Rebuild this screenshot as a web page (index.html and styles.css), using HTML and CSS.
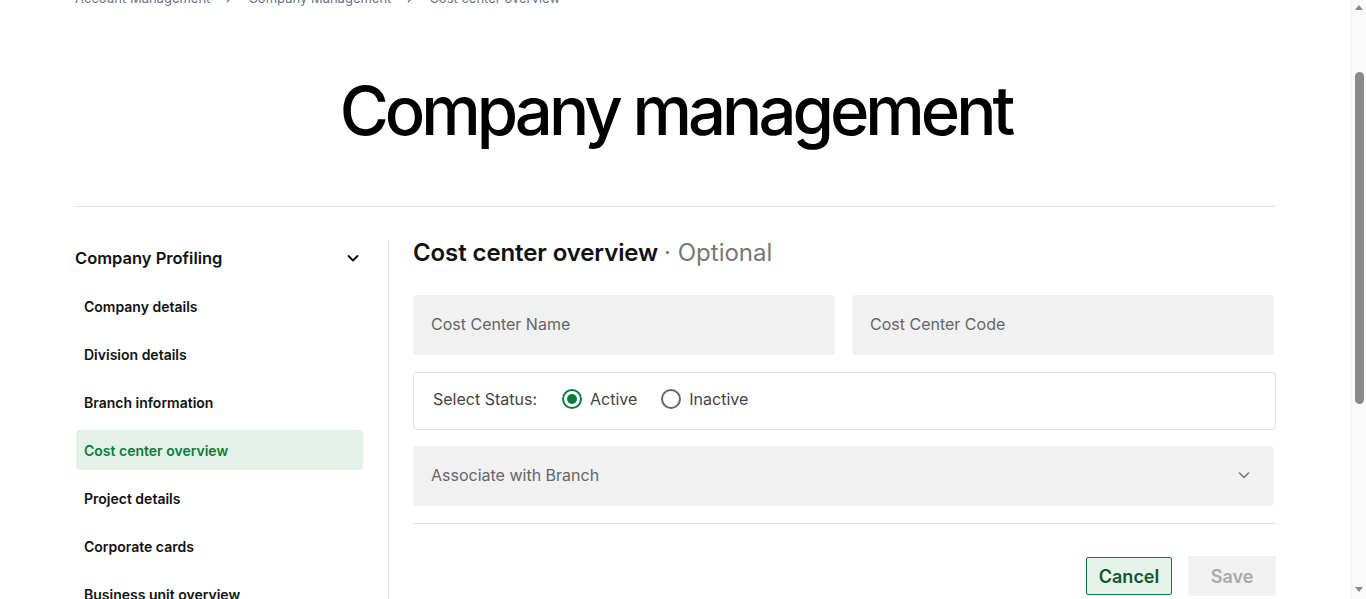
FILE: index.html
```html
<!DOCTYPE html>
<html lang="en">
<head>
<meta charset="utf-8">
<title>Company management</title>
<link rel="stylesheet" href="styles.css">
</head>
<body>
<div class="page">
  <nav class="breadcrumb">
    <span class="crumb">Account Management</span>
    <svg class="crumb-sep" width="8" height="12" viewBox="0 0 8 12"><path d="M2 2l4 4-4 4" fill="none" stroke="#6b7280" stroke-width="1.3"/></svg>
    <span class="crumb">Company Management</span>
    <svg class="crumb-sep" width="8" height="12" viewBox="0 0 8 12"><path d="M2 2l4 4-4 4" fill="none" stroke="#6b7280" stroke-width="1.3"/></svg>
    <span class="crumb">Cost center overview</span>
  </nav>

  <h1 class="page-title">Company management</h1>

  <div class="layout">
    <aside class="sidebar">
      <div class="side-head">
        <span>Company Profiling</span>
        <svg width="14" height="14" viewBox="0 0 14 14"><path d="M2.5 5l4.5 4.5L11.5 5" fill="none" stroke="#111" stroke-width="2" stroke-linecap="round" stroke-linejoin="round"/></svg>
      </div>
      <ul class="side-list">
        <li class="side-item">Company details</li>
        <li class="side-item">Division details</li>
        <li class="side-item">Branch information</li>
        <li class="side-item active">Cost center overview</li>
        <li class="side-item">Project details</li>
        <li class="side-item">Corporate cards</li>
        <li class="side-item">Business unit overview</li>
        <li class="side-item">Employee details</li>
        <li class="side-item">Approval workflows</li>
      </ul>
    </aside>

    <main class="content">
      <h2 class="section-title">Cost center overview <span class="optional">· Optional</span></h2>

      <div class="field-row">
        <div class="field">Cost Center Name</div>
        <div class="field">Cost Center Code</div>
      </div>

      <div class="status-box">
        <span class="status-label">Select Status:</span>
        <span class="radio-opt"><span class="radio checked"></span>Active</span>
        <span class="radio-opt"><span class="radio"></span>Inactive</span>
      </div>

      <div class="field select">
        <span>Associate with Branch</span>
        <svg width="14" height="14" viewBox="0 0 14 14"><path d="M2.5 5l4.5 4.5L11.5 5" fill="none" stroke="#777" stroke-width="1.6" stroke-linecap="round" stroke-linejoin="round"/></svg>
      </div>

      <hr class="divider">

      <div class="actions">
        <button class="btn btn-cancel">Cancel</button>
        <button class="btn btn-save">Save</button>
      </div>
    </main>
  </div>
</div>

<div class="fake-scrollbar" aria-hidden="true">
  <span class="sb-arrow sb-up"></span>
  <span class="sb-thumb"></span>
  <span class="sb-arrow sb-down"></span>
</div>
<script src="script.js"></script>
</body>
</html>
```

FILE: styles.css
```css
* { box-sizing: border-box; }
body {
  margin: 0;
  padding-right: 15px;
  background: #fff;
  font-family: Inter, "Liberation Sans", sans-serif;
  color: #111;
}
.page {
  max-width: 1201px;
  margin: 0 auto;
  padding: 83px 0 480px;
}
.breadcrumb {
  display: flex;
  align-items: center;
  gap: 15px;
  height: 20px;
  font-size: 13px;
  color: #6b7280;
}
.page-title {
  margin: 60px 0 0;
  height: 86px;
  font-size: 67px;
  line-height: 86px;
  font-weight: 500;
  letter-spacing: -4px;
  text-align: center;
  color: #000;
  padding-bottom: 52px;
  box-sizing: content-box;
  border-bottom: 1px solid #e2e2e2;
}
.layout {
  display: flex;
  padding-top: 33px;
}
.sidebar {
  width: 314px;
  padding-right: 25px;
  border-right: 1px solid #e2e2e2;
  flex-shrink: 0;
}
.side-head {
  display: flex;
  align-items: center;
  justify-content: space-between;
  height: 36px;
  padding-right: 3px;
  font-size: 16.5px;
  font-weight: 600;
}
.side-list {
  list-style: none;
  margin: 10px 0 0;
  padding: 0;
  display: flex;
  flex-direction: column;
  gap: 8px;
}
.side-item {
  height: 40px;
  display: flex;
  align-items: center;
  padding-left: 8px;
  font-size: 14px;
  font-weight: 600;
  border-radius: 4px;
  margin-left: 1px;
}
.side-item.active {
  background: #e3f1e8;
  color: #0b7a3e;
}
.content {
  flex: 1;
  padding-left: 24px;
}
.section-title {
  margin: 0;
  height: 26px;
  line-height: 26px;
  font-size: 24px;
  font-weight: 600;
  letter-spacing: -0.1px;
}
.optional {
  font-weight: 400;
  color: #777;
  letter-spacing: 0;
}
.field-row {
  display: grid;
  grid-template-columns: 1fr 1fr;
  gap: 17px;
  margin-top: 29px;
  padding-right: 2px;
}
.field {
  height: 60px;
  background: #f1f1f1;
  border-radius: 4px;
  display: flex;
  align-items: center;
  padding: 0 18px 3px;
  font-size: 16px;
  color: #666;
}
.status-box {
  margin-top: 17px;
  height: 58px;
  border: 1px solid #e2e2e2;
  border-radius: 4px;
  display: flex;
  align-items: center;
  padding: 0 0 4px 19px;
  font-size: 16px;
  color: #444;
}
.status-label { margin-right: 25px; }
.radio-opt {
  display: flex;
  align-items: center;
  gap: 8px;
  margin-right: 24px;
}
.radio {
  width: 20px;
  height: 20px;
  border-radius: 50%;
  border: 2px solid #666;
  display: inline-flex;
  align-items: center;
  justify-content: center;
}
.radio.checked { border-color: #0b7a3e; }
.radio.checked::after {
  content: "";
  width: 10px;
  height: 10px;
  border-radius: 50%;
  background: #0b7a3e;
}
.select {
  margin-top: 16px;
  margin-right: 2px;
  justify-content: space-between;
  padding-right: 23px;
}
.divider {
  margin: 17px 0 0;
  border: 0;
  border-top: 1px solid #e2e2e2;
}
.actions {
  display: flex;
  justify-content: flex-end;
  align-items: center;
  gap: 16px;
  margin-top: 32px;
}
.btn {
  font-family: Inter, "Liberation Sans", sans-serif;
  font-size: 18px;
  font-weight: 600;
  border-radius: 2px;
  cursor: pointer;
}
.btn-cancel {
  width: 86px;
  height: 38px;
  border: 1px solid #0b7a3e;
  background: #e6f2ea;
  color: #0a5a2f;
}
.btn-save {
  width: 88px;
  height: 40px;
  border: 0;
  background: #f1f1f1;
  color: #aaa;
}

/* browser scrollbar imitation */
.fake-scrollbar {
  position: fixed;
  top: 0;
  right: 0;
  width: 15px;
  height: 100vh;
  background: #fafafa;
  border-left: 1px solid #f0f0f0;
}
.sb-thumb {
  position: absolute;
  left: 3px;
  top: 72px;
  width: 9px;
  height: 332px;
  border-radius: 5px;
  background: #8a8a8a;
}
.sb-arrow {
  position: absolute;
  left: 3px;
  width: 0;
  height: 0;
  border-left: 4.5px solid transparent;
  border-right: 4.5px solid transparent;
}
.sb-up {
  top: 5px;
  border-bottom: 5px solid #8a8a8a;
}
.sb-down {
  bottom: 7px;
  border-top: 5px solid #8a8a8a;
}
```

FILE: script.js
```js
window.scrollTo(0, 95);
```
